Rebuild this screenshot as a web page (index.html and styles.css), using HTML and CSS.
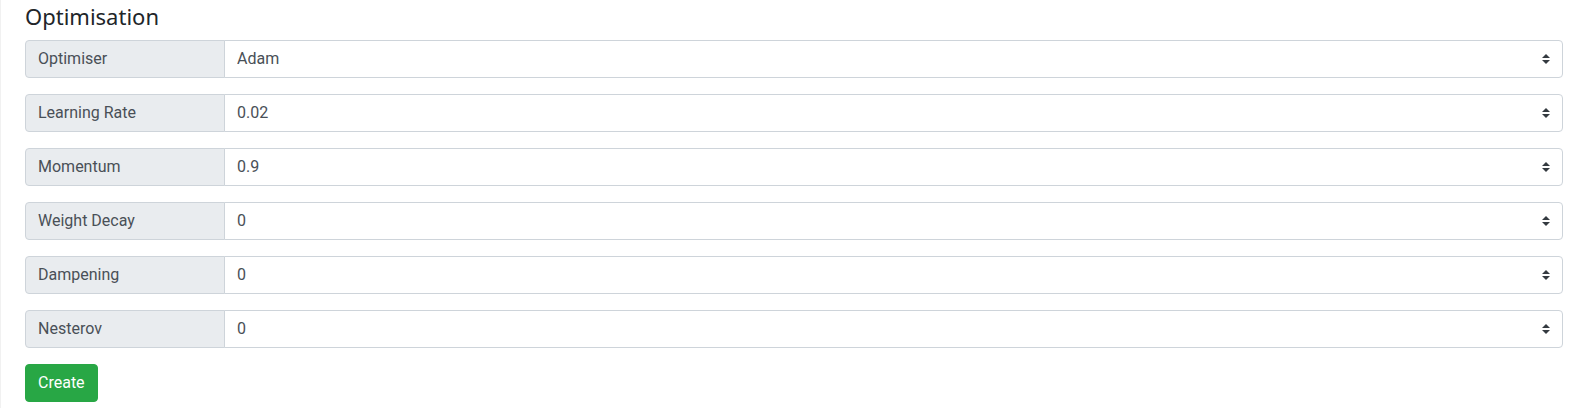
FILE: index.html
```html
<!DOCTYPE html>
<html lang="en">
<head>
<meta charset="utf-8">
<title>Optimisation</title>
<link rel="stylesheet" href="styles.css">
</head>
<body>
<div class="page">
  <h4 class="title">Optimisation</h4>
  <form class="form">
    <div class="input-group">
      <span class="label">Optimiser</span>
      <select class="select"><option>Adam</option></select>
    </div>
    <div class="input-group">
      <span class="label">Learning Rate</span>
      <select class="select"><option>0.02</option></select>
    </div>
    <div class="input-group">
      <span class="label">Momentum</span>
      <select class="select"><option>0.9</option></select>
    </div>
    <div class="input-group">
      <span class="label">Weight Decay</span>
      <select class="select"><option>0</option></select>
    </div>
    <div class="input-group">
      <span class="label">Dampening</span>
      <select class="select"><option>0</option></select>
    </div>
    <div class="input-group">
      <span class="label">Nesterov</span>
      <select class="select"><option>0</option></select>
    </div>
    <div class="actions">
      <button type="button" class="btn-success">Create</button>
    </div>
  </form>
</div>
</body>
</html>
```
FILE: styles.css
```css
* { box-sizing: border-box; }
html, body { margin: 0; padding: 0; background: #fff; }
body {
  font-family: Roboto, "Liberation Sans", sans-serif;
  font-size: 16px;
  line-height: 1.5;
  color: #212529;
  border-left: 1px solid #f1f1f1;
  height: 408px;
}
.page {
  padding: 0 19px 0 24px;
}
.title {
  font-family: "Noto Sans", "Open Sans", sans-serif;
  font-weight: 400;
  font-size: 22px;
  line-height: 1.2;
  margin: 0;
  padding-top: 3px;
  height: 40px;
  color: #212529;
}
.form { display: flex; flex-direction: column; }
.input-group {
  display: flex;
  align-items: stretch;
  height: 38px;
  margin-bottom: 16px;
}
.label {
  flex: 0 0 200px;
  display: flex;
  align-items: center;
  padding: 6px 12px;
  font-size: 16px;
  line-height: 1.5;
  color: #495057;
  background: #e9ecef;
  border: 1px solid #ced4da;
  border-radius: 4px 0 0 4px;
}
.select {
  flex: 1 1 auto;
  margin-left: -1px;
  height: 38px;
  padding: 6px 28px 6px 12px;
  font-family: Roboto, "Liberation Sans", sans-serif;
  font-size: 16px;
  line-height: 1.5;
  color: #495057;
  background: #fff url("data:image/svg+xml,%3csvg xmlns='http://www.w3.org/2000/svg' width='4' height='5' viewBox='0 0 4 5'%3e%3cpath fill='%23343a40' d='M2 0L0 2h4zm0 5L0 3h4z'/%3e%3c/svg%3e") no-repeat right 12px center / 8px 10px;
  border: 1px solid #ced4da;
  border-radius: 0 4px 4px 0;
  -webkit-appearance: none;
  appearance: none;
  outline: none;
}
.actions { display: flex; }
.btn-success {
  font-family: Roboto, "Liberation Sans", sans-serif;
  font-size: 16px;
  line-height: 1.5;
  padding: 6px 12px;
  color: #fff;
  background: #28a745;
  border: 1px solid #28a745;
  border-radius: 4px;
  cursor: pointer;
}
```
